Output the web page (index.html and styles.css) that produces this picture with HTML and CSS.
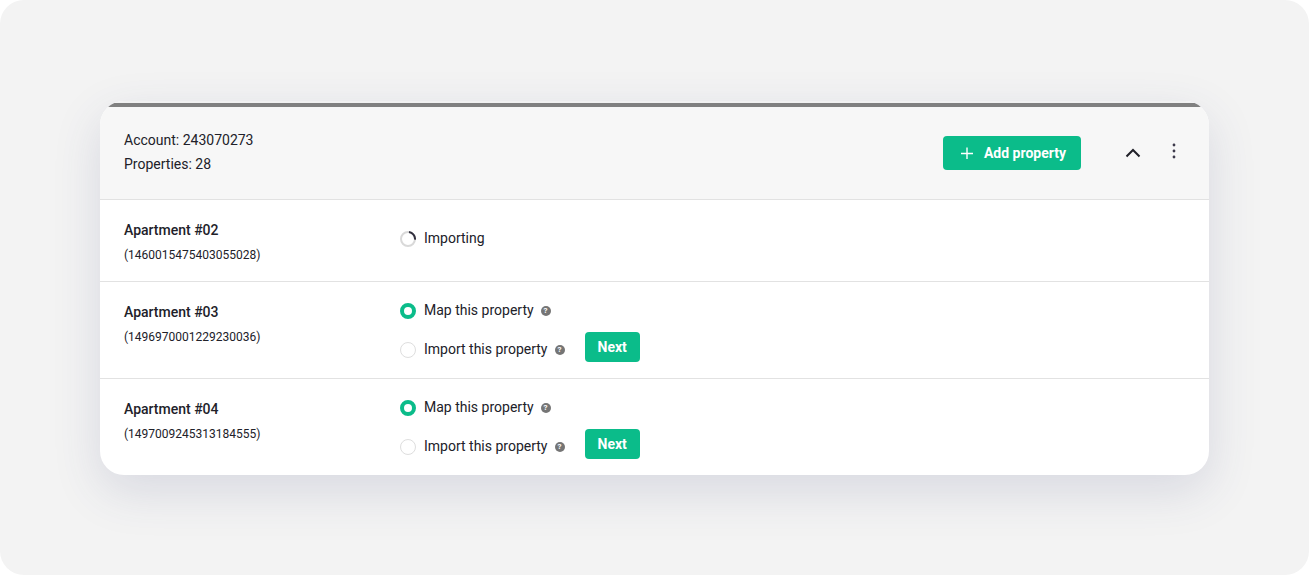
FILE: index.html
```
<!DOCTYPE html>
<html lang="en">
<head>
  <meta charset="UTF-8" />
  <meta name="viewport" content="width=device-width, initial-scale=1.0"/>
  <title>Account properties</title>
  <link rel="stylesheet" href="styles.css">
</head>
<body>
  <main class="page">
    <section class="card">
      <header class="card-header">
        <div class="account">
          <div>Account: 243070273</div>
          <div>Properties: 28</div>
        </div>
        <div class="actions">
          <button type="button" class="btn btn-add">
            <svg width="12" height="12" viewBox="0 0 12 12" fill="none" stroke="currentColor" stroke-width="1.4" aria-hidden="true"><path d="M6 .5v12M0 6.5h12"/></svg>
            Add property
          </button>
          <button type="button" class="icon-btn" aria-label="Collapse">
            <svg width="16" height="16" viewBox="0 0 16 16" fill="none" stroke="currentColor" stroke-width="2" aria-hidden="true"><path d="M1.5 11.5L8 5l6.5 6.5"/></svg>
          </button>
          <button type="button" class="icon-btn" aria-label="More options">
            <svg width="16" height="20" viewBox="0 0 16 20" fill="#3d3a4b" aria-hidden="true"><circle cx="8" cy="4" r="1.4"/><circle cx="8" cy="10" r="1.4"/><circle cx="8" cy="16" r="1.4"/></svg>
          </button>
        </div>
      </header>

      <article class="row">
        <div class="property">
          <h2>Apartment #02</h2>
          <p>(1460015475403055028)</p>
        </div>
        <div class="status">
          <svg width="16" height="18" viewBox="0 -2 16 18" fill="none" stroke-width="2" aria-hidden="true">
            <circle cx="8" cy="8" r="7" stroke="#d9d9d9"/>
            <path d="M9 1.1A7 7 0 0 1 15 8.6" stroke="#33313f"/>
          </svg>
          Importing
        </div>
      </article>

      <article class="row">
        <div class="property">
          <h2>Apartment #03</h2>
          <p>(1496970001229230036)</p>
        </div>
        <form class="choices">
          <div class="options">
            <div class="option">
              <input type="radio" id="map03" name="mode" value="map" checked />
              <label for="map03">Map this property</label>
              <span class="help">?</span>
            </div>
            <div class="option">
              <input type="radio" id="import03" name="mode" value="import" />
              <label for="import03">Import this property</label>
              <span class="help">?</span>
            </div>
          </div>
          <button type="button" class="btn btn-next">Next</button>
        </form>
      </article>

      <article class="row">
        <div class="property">
          <h2>Apartment #04</h2>
          <p>(1497009245313184555)</p>
        </div>
        <form class="choices">
          <div class="options">
            <div class="option">
              <input type="radio" id="map04" name="mode" value="map" checked />
              <label for="map04">Map this property</label>
              <span class="help">?</span>
            </div>
            <div class="option">
              <input type="radio" id="import04" name="mode" value="import" />
              <label for="import04">Import this property</label>
              <span class="help">?</span>
            </div>
          </div>
          <button type="button" class="btn btn-next">Next</button>
        </form>
      </article>
    </section>
  </main>
</body>
</html>
```
FILE: styles.css
```
* {
  box-sizing: border-box;
}

body {
  margin: 0;
  background-color: #fff;
  font-family: Roboto, "Liberation Sans", sans-serif;
  font-size: 14px;
  line-height: 24px;
  color: #212129;
}

.page {
  min-height: 100vh;
  padding: 101px 100px 100px;
  border-radius: 24px;
  background-color: #f3f3f3;
}

.card {
  overflow: hidden;
  border-radius: 24px;
  background-color: #fff;
  box-shadow: 0 16px 48px rgba(60, 70, 120, 0.15);
}

.card-header {
  display: flex;
  justify-content: space-between;
  align-items: flex-start;
  padding: 27px 24px 23px;
  border-bottom: 1px solid #e2e2e2;
  background: linear-gradient(#f1f1f1 2px, #808080 2px, #808080 6px, #f7f7f7 6px);
}

.actions {
  display: flex;
  align-items: center;
  padding-top: 8px;
}

.btn {
  padding-bottom: 2px;
  border: none;
  border-radius: 4px;
  background-color: #0bbc8a;
  color: #fff;
  font-family: inherit;
  font-size: 14px;
  font-weight: bold;
  cursor: pointer;
}

.btn-add {
  display: flex;
  align-items: center;
  gap: 11px;
  height: 34px;
  margin-right: 44px;
  padding-left: 18px;
  padding-right: 15px;
}

.icon-btn {
  display: flex;
  padding: 0;
  border: none;
  background: none;
  color: #212129;
  cursor: pointer;
}

.icon-btn + .icon-btn {
  margin: 0 3px 4px 25px;
}

.row {
  display: grid;
  grid-template-columns: 276px 1fr;
  align-items: start;
  padding: 16px 24px 14px;
}

.row + .row {
  border-top: 1px solid #e2e2e2;
}

.property {
  padding-top: 2px;
}

.property h2 {
  margin: 0;
  font-size: 14px;
  font-weight: 500;
}

.property p {
  margin: 0;
  padding-top: 1px;
  font-size: 12px;
}

.status {
  display: flex;
  align-items: center;
  gap: 8px;
  padding-top: 10px;
}

.choices {
  display: flex;
  align-items: flex-end;
  gap: 20px;
  padding-bottom: 2px;
}

.options {
  display: grid;
  gap: 15px;
  padding-bottom: 1px;
}

.option {
  display: flex;
  align-items: center;
}

.option input {
  appearance: none;
  width: 16px;
  height: 16px;
  margin: 2px 8px 0 0;
  border: 1px solid #dedede;
  border-radius: 50%;
  background-color: #fff;
}

.option input:checked {
  border: 4px solid #0bbc8a;
}

.help {
  width: 10px;
  height: 10px;
  margin: 2px 0 0 7px;
  border-radius: 50%;
  background-color: #757575;
  color: #fff;
  font-size: 8px;
  font-weight: bold;
  line-height: 10px;
  text-align: center;
}

.btn-next {
  height: 30px;
  padding-left: 13px;
  padding-right: 13px;
}
```
